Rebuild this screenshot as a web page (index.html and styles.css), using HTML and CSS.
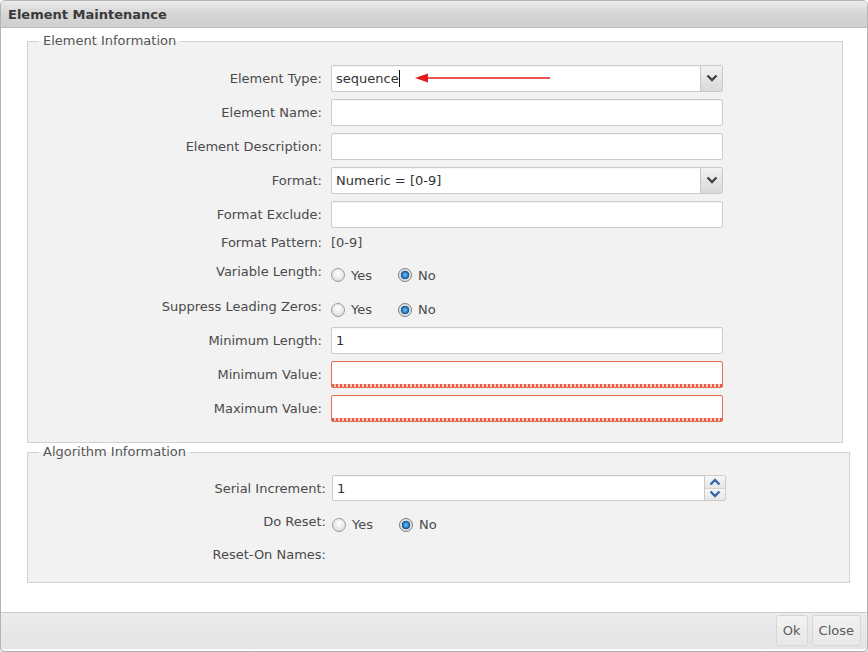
FILE: index.html
```html
<!DOCTYPE html>
<html>
<head>
<meta charset="utf-8">
<link rel="stylesheet" href="styles.css">
</head>
<body>
<div class="dialog">
  <div class="titlebar"><span class="title">Element Maintenance</span></div>
  <div class="content">
    <fieldset class="fs fs-elem">
      <legend>Element Information</legend>
      <div class="row">
        <span class="lbl">Element Type:</span>
        <div class="field select">
          <span class="val">sequence<span class="caret"></span></span>
          <span class="sel-btn"><svg width="12" height="8" viewBox="0 0 12 8"><path d="M1.5 1.5 L6 6 L10.5 1.5" fill="none" stroke="#444" stroke-width="2.4"/></svg></span>
        </div>
      </div>
      <div class="row"><span class="lbl">Element Name:</span><div class="field"></div></div>
      <div class="row"><span class="lbl">Element Description:</span><div class="field"></div></div>
      <div class="row">
        <span class="lbl">Format:</span>
        <div class="field select">
          <span class="val">Numeric = [0-9]</span>
          <span class="sel-btn"><svg width="12" height="8" viewBox="0 0 12 8"><path d="M1.5 1.5 L6 6 L10.5 1.5" fill="none" stroke="#444" stroke-width="2.4"/></svg></span>
        </div>
      </div>
      <div class="row"><span class="lbl">Format Exclude:</span><div class="field"></div></div>
      <div class="row short"><span class="lbl">Format Pattern:</span><span class="plain">[0-9]</span></div>
      <div class="row tall">
        <span class="lbl">Variable Length:</span>
        <div class="radios">
          <span class="opt"><span class="radio"></span>Yes</span>
          <span class="opt"><span class="radio on"></span>No</span>
        </div>
      </div>
      <div class="row">
        <span class="lbl">Suppress Leading Zeros:</span>
        <div class="radios">
          <span class="opt"><span class="radio"></span>Yes</span>
          <span class="opt"><span class="radio on"></span>No</span>
        </div>
      </div>
      <div class="row"><span class="lbl">Minimum Length:</span><div class="field"><span class="val">1</span></div></div>
      <div class="row"><span class="lbl">Minimum Value:</span><div class="field error"></div></div>
      <div class="row"><span class="lbl">Maximum Value:</span><div class="field error"></div></div>
    </fieldset>

    <fieldset class="fs fs-algo">
      <legend>Algorithm Information</legend>
      <div class="row">
        <span class="lbl">Serial Increment:</span>
        <div class="field spin">
          <span class="val">1</span>
          <span class="spin-btns">
            <span class="spin-b"><svg width="12" height="8" viewBox="0 0 12 8"><path d="M1.5 6.5 L6 2 L10.5 6.5" fill="none" stroke="#2d69a8" stroke-width="2.4"/></svg></span>
            <span class="spin-b"><svg width="12" height="8" viewBox="0 0 12 8"><path d="M1.5 1.5 L6 6 L10.5 1.5" fill="none" stroke="#2d69a8" stroke-width="2.4"/></svg></span>
          </span>
        </div>
      </div>
      <div class="row reset">
        <span class="lbl">Do Reset:</span>
        <div class="radios">
          <span class="opt"><span class="radio"></span>Yes</span>
          <span class="opt"><span class="radio on"></span>No</span>
        </div>
      </div>
      <div class="row"><span class="lbl">Reset-On Names:</span></div>
    </fieldset>
  </div>
  <div class="footer">
    <button class="btn">Ok</button>
    <button class="btn">Close</button>
  </div>
  <svg class="annot" width="140" height="12" viewBox="0 0 140 12">
    <line x1="10" y1="6" x2="135" y2="6" stroke="#e01b1b" stroke-width="1.6"/>
    <path d="M0 6 L13 1.5 L13 10.5 Z" fill="#e01b1b"/>
  </svg>
</div>
</body>
</html>
```

FILE: styles.css
```css
html, body {
  margin: 0;
  padding: 0;
  background: #ffffff;
}
body {
  font-family: "DejaVu Sans", Verdana, sans-serif;
  font-size: 13px;
  color: #4a4a4a;
}
.dialog {
  position: relative;
  width: 868px;
  height: 652px;
  box-sizing: border-box;
  border: 1px solid #b4b4b4;
  border-radius: 5px;
  background: #fff;
  overflow: hidden;
  box-shadow: 0 1px 2px rgba(0,0,0,0.25);
}
.titlebar {
  height: 26px;
  border-bottom: 1px solid #bdbdbd;
  background: linear-gradient(#ececec, #d6d6d6 45%, #cfcfcf);
  display: flex;
  align-items: center;
  padding-left: 7px;
}
.title {
  font-weight: bold;
  color: #3a3a3a;
  font-size: 13px;
}
.content {
  height: 584px;
  box-sizing: border-box;
  padding: 5px 0 0 26px;
  background: #fff;
}
.fs {
  margin: 0;
  padding: 12px 0 17px 0;
  border: 1px solid #d2d2d2;
  background: #f2f2f2;
  box-sizing: border-box;
}
.fs legend {
  margin-left: 11px;
  padding: 0 4px;
  line-height: 16px;
  color: #555;
}
.fs-elem {
  width: 816px;
}
.fs-algo {
  width: 823px;
  margin-top: 1px;
  padding: 11px 0 11px 0;
}
.row {
  display: flex;
  align-items: center;
  height: 34px;
}
.row.short { height: 23px; }
.row.tall { height: 35px; }
.row.reset { height: 32px; }
.lbl {
  width: 294px;
  margin-right: 9px;
  text-align: right;
  flex: none;
  color: #4a4a4a;
}
.fs-algo .lbl {
  width: 298px;
  margin-right: 6px;
}
.plain {
  color: #4a4a4a;
}
.field {
  width: 392px;
  height: 27px;
  box-sizing: border-box;
  border: 1px solid #cbcbcb;
  border-radius: 2px;
  background: #fff;
  display: flex;
  align-items: center;
  box-shadow: inset 0 1px 1px rgba(0,0,0,0.04);
}
.val {
  padding-left: 4px;
  color: #333;
  flex: 1;
  display: flex;
  align-items: center;
}
.caret {
  display: inline-block;
  width: 1px;
  height: 17px;
  background: #111;
  margin-left: 0;
}
.select .sel-btn {
  width: 22px;
  height: 100%;
  box-sizing: border-box;
  border-left: 1px solid #c6c6c6;
  background: linear-gradient(#f2f2f2, #d9d9d9);
  display: flex;
  align-items: center;
  justify-content: center;
}
.field.error {
  border-color: #e2704f;
  background-color: #fff;
  background-image: repeating-linear-gradient(90deg, #ee5a4a 0 2px, #fbc8c0 2px 4px);
  background-size: 100% 3px;
  background-repeat: no-repeat;
  background-position: left bottom;
}
.field.spin {
  width: 394px;
  height: 26px;
}
.spin-btns {
  width: 21px;
  height: 100%;
  box-sizing: border-box;
  border-left: 1px solid #cbcbcb;
  display: flex;
  flex-direction: column;
}
.spin-b {
  flex: 1;
  display: flex;
  align-items: center;
  justify-content: center;
  background: linear-gradient(#f7f7f7, #e6e6e6);
}
.spin-b + .spin-b {
  border-top: 1px solid #d4d4d4;
}
.radios {
  display: flex;
  align-items: center;
  padding-top: 7px;
}
.opt {
  display: flex;
  align-items: center;
  color: #4a4a4a;
}
.opt + .opt {
  margin-left: 26px;
}
.radio {
  width: 14px;
  height: 14px;
  box-sizing: border-box;
  border-radius: 50%;
  border: 1px solid #9a9a9a;
  background: radial-gradient(circle at 50% 35%, #ffffff, #e2e2e2 70%, #cfcfcf);
  margin-right: 6px;
  position: relative;
}
.radio.on {
  border-color: #7e7e7e;
  background: radial-gradient(circle at 50% 50%, #7fc1f0 0, #2a84cf 2.5px, #1d4f86 4px, #e6e6e6 4.6px, #d0d0d0 100%);
}
.footer {
  height: 37px;
  box-sizing: border-box;
  border-top: 1px solid #cbcbcb;
  background: linear-gradient(#ececec, #e4e4e4);
  display: flex;
  justify-content: flex-end;
  align-items: flex-start;
  padding: 2px 6px 0 0;
  gap: 4px;
}
.btn {
  font-family: "DejaVu Sans", Verdana, sans-serif;
  font-size: 13px;
  color: #5a5a5a;
  height: 31px;
  padding: 0 6px;
  border: 1px solid #d6d6d6;
  border-radius: 3px;
  background: linear-gradient(#f2f2f2, #e8e8e8);
}
.annot {
  position: absolute;
  left: 414px;
  top: 71px;
}
```
